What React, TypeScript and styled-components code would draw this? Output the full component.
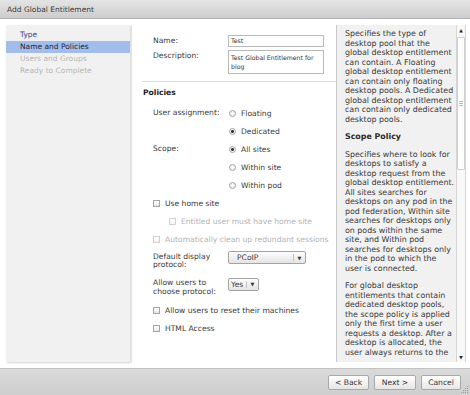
import React from "react";
import styled, { createGlobalStyle } from "styled-components";

const GlobalStyle = createGlobalStyle`
  html, body { margin: 0; padding: 0; background: #fff; }
  body { font-family: "DejaVu Sans", Verdana, sans-serif; color: #333; }
  #root { width: 470px; height: 395px; }
  * { box-sizing: border-box; }
`;

const Dialog = styled.div`
  position: relative;
  width: 470px;
  height: 395px;
  display: flex;
  flex-direction: column;
  background: #fff;
  overflow: hidden;
`;

const TitleBar = styled.div`
  height: 19px;
  flex: none;
  display: flex;
  align-items: center;
  padding-left: 7px;
  background: linear-gradient(#e4e4e4, #cdcdcd);
  border-bottom: 1px solid #b4b4b4;
  font-size: 7.5px;
  color: #3a3a3a;
`;

const Body = styled.div`
  flex: 1;
  min-height: 0;
  display: flex;
  padding: 6px 4px 6px 6px;
`;

const Nav = styled.div`
  width: 124px;
  flex: none;
  background: #f1f1f1;
  box-shadow: 1px 1px 2px rgba(0, 0, 0, 0.18);
  padding-top: 4px;
`;

const NavItem = styled.div<{ $state: "done" | "active" | "todo" }>`
  height: 12px;
  line-height: 12px;
  padding-left: 14px;
  font-size: 7.5px;
  white-space: nowrap;
  color: ${(p) => (p.$state === "done" ? "#3a3a8e" : p.$state === "active" ? "#23233f" : "#b6b6b6")};
  background: ${(p) => (p.$state === "active" ? "#a2bdea" : "transparent")};
`;

const FormPanel = styled.div`
  width: 206px;
  flex: none;
  margin-left: 1px;
  background: #fff;
  border-left: 1px solid #e2e2e2;
  border-right: 1px solid #c9c9c9;
  padding: 10px 0 0 21px;
  display: flex;
  flex-direction: column;
  font-size: 7.6px;
  color: #3a3a3a;
`;

const FieldGrid = styled.div`
  display: grid;
  grid-template-columns: 75px 96px;
  row-gap: 3px;
  align-items: start;
`;

const FieldLabel = styled.div`
  line-height: 12px;
  white-space: nowrap;
`;

const TextBox = styled.div<{ $multi?: boolean }>`
  height: ${(p) => (p.$multi ? 24 : 12)}px;
  border: 1px solid #b9b9b9;
  background: #fff;
  font-size: 6.2px;
  line-height: ${(p) => (p.$multi ? 9 : 10)}px;
  padding: ${(p) => (p.$multi ? "2px 2px" : "0 2px")};
  color: #333;
`;

const Divider = styled.div`
  height: 1px;
  background: #dcdcdc;
  margin: 7px 0 0 -11px;
`;

const SectionTitle = styled.div`
  font-weight: bold;
  line-height: 9.5px;
  margin: 6px 0 0 -10px;
  color: #222;
`;

const PolicyGrid = styled.div`
  display: grid;
  grid-template-columns: 75px auto;
  margin-top: 6.5px;
`;

const PolicyLabel = styled.div<{ $rows: number }>`
  grid-row: span ${(p) => p.$rows};
  line-height: 18px;
  white-space: nowrap;
`;

const OptionList = styled.div<{ $rows: number }>`
  grid-row: span ${(p) => p.$rows};
  display: flex;
  flex-direction: column;
`;

const OptionRow = styled.div`
  height: 18px;
  display: flex;
  align-items: center;
  gap: 5px;
  padding-left: 1px;
  white-space: nowrap;
`;

const Radio = styled.span<{ $checked?: boolean }>`
  width: 7px;
  height: 7px;
  border-radius: 50%;
  border: 1px solid #a3a3a3;
  background: radial-gradient(circle, ${(p) => (p.$checked ? "#333 0 1.3px, #fff 1.6px" : "#fff 0")}, #e8e8e8 100%);
  flex: none;
`;

const CheckRow = styled.div<{ $indent?: boolean; $disabled?: boolean }>`
  height: 18px;
  display: flex;
  align-items: center;
  gap: 5px;
  padding-left: ${(p) => (p.$indent ? 16 : 0)}px;
  white-space: nowrap;
  color: ${(p) => (p.$disabled ? "#b3b3b3" : "#3a3a3a")};
`;

const Checkbox = styled.span<{ $disabled?: boolean }>`
  width: 7px;
  height: 7px;
  flex: none;
  border: 1px solid ${(p) => (p.$disabled ? "#d0d0d0" : "#a6a6a6")};
  background: linear-gradient(#fff, ${(p) => (p.$disabled ? "#f3f3f3" : "#e6e6e6")});
`;

const SelectRow = styled.div<{ $gap: number }>`
  display: grid;
  grid-template-columns: 75px auto;
  align-items: start;
  margin-top: ${(p) => p.$gap}px;
`;

const SelectLabel = styled.div`
  line-height: 8.5px;
  padding-top: 1.5px;
`;

const Select = styled.div<{ $width: number }>`
  width: ${(p) => p.$width}px;
  height: 13px;
  display: flex;
  align-items: stretch;
  border: 1px solid #a3a3a3;
  border-radius: 2px;
  background: linear-gradient(#fdfdfd, #e4e4e4);
`;

const SelectValue = styled.div<{ $pad: number }>`
  flex: 1;
  line-height: 11px;
  padding-left: ${(p) => p.$pad}px;
  white-space: nowrap;
`;

const SelectArrow = styled.div`
  width: 12px;
  flex: none;
  border-left: 1px solid #c4c4c4;
  margin: 2px 0;
  display: flex;
  align-items: center;
  justify-content: center;
  font-size: 5px;
  color: #333;
`;

const BottomChecks = styled.div`
  margin-top: 5px;
  display: flex;
  flex-direction: column;
`;

const HelpPanel = styled.div`
  flex: 1;
  min-width: 0;
  background: #f1f1f1;
  padding: 4.25px 0 0 8px;
  overflow: hidden;
  font-size: 7.9px;
  line-height: 9.5px;
  color: #3a3a3a;
`;

const HelpPara = styled.p`
  margin: 0 0 8px;
  white-space: nowrap;
`;

const HelpHeading = styled.div`
  font-weight: bold;
  margin-bottom: 8px;
  color: #2a2a2a;
`;

const Scrollbar = styled.div`
  width: 10px;
  flex: none;
  border-left: 1px solid #d6d6d6;
  border-right: 1px solid #d6d6d6;
  background: #f8f8f8;
  display: flex;
  flex-direction: column;
`;

const ScrollButton = styled.div`
  height: 10px;
  display: flex;
  align-items: center;
  justify-content: center;
  font-size: 4.5px;
  color: #222;
`;

const ScrollThumb = styled.div`
  height: 133px;
  margin: 2px 0 0;
  border: 1px solid #cfcfcf;
  border-radius: 1px;
  background: #fdfdfd;
  display: flex;
  align-items: center;
  justify-content: center;
`;

const Grip = styled.div`
  width: 4px;
  height: 5px;
  border-top: 1px solid #bdbdbd;
  border-bottom: 1px solid #bdbdbd;
  position: relative;
  &::after {
    content: "";
    position: absolute;
    left: 0;
    right: 0;
    top: 1px;
    height: 1px;
    background: #bdbdbd;
  }
`;

const ScrollSpacer = styled.div`
  flex: 1;
`;

const BottomBar = styled.div`
  height: 27px;
  flex: none;
  display: flex;
  align-items: center;
  justify-content: flex-end;
  gap: 5px;
  padding-right: 9px;
  background: linear-gradient(#dadada, #cecece);
  border-top: 1px solid #c2c2c2;
`;

const Button = styled.button<{ $width: number }>`
  width: ${(p) => p.$width}px;
  height: 15px;
  padding: 0;
  border: 1px solid #a9a9a9;
  border-radius: 2px;
  background: linear-gradient(#ffffff, #e6e6e6);
  font-family: "DejaVu Sans", Verdana, sans-serif;
  font-size: 7.6px;
  color: #333;
`;

const ResizeGrip = styled.svg`
  position: absolute;
  right: 1px;
  bottom: 1px;
`;

const helpP1 = [
  "Specifies the type of",
  "desktop pool that the",
  "global desktop entitlement",
  "can contain. A Floating",
  "global desktop entitlement",
  "can contain only floating",
  "desktop pools. A Dedicated",
  "global desktop entitlement",
  "can contain only dedicated",
  "desktop pools.",
];

const helpP2 = [
  "Specifies where to look for",
  "desktops to satisfy a",
  "desktop request from the",
  "global desktop entitlement.",
  "All sites searches for",
  "desktops on any pod in the",
  "pod federation, Within site",
  "searches for desktops only",
  "on pods within the same",
  "site, and Within pod",
  "searches for desktops only",
  "in the pod to which the",
  "user is connected.",
];

const helpP3 = [
  "For global desktop",
  "entitlements that contain",
  "dedicated desktop pools,",
  "the scope policy is applied",
  "only the first time a user",
  "requests a desktop. After a",
  "desktop is allocated, the",
  "user always returns to the",
];

const Lines = ({ lines }: { lines: string[] }) => (
  <HelpPara>
    {lines.map((l, i) => (
      <React.Fragment key={i}>
        {l}
        {i < lines.length - 1 && <br />}
      </React.Fragment>
    ))}
  </HelpPara>
);

export default function App() {
  return (
    <>
      <GlobalStyle />
      <Dialog>
        <TitleBar>Add Global Entitlement</TitleBar>
        <Body>
          <Nav>
            <NavItem $state="done">Type</NavItem>
            <NavItem $state="active">Name and Policies</NavItem>
            <NavItem $state="todo">Users and Groups</NavItem>
            <NavItem $state="todo">Ready to Complete</NavItem>
          </Nav>
          <FormPanel>
            <FieldGrid>
              <FieldLabel>Name:</FieldLabel>
              <TextBox>Test</TextBox>
              <FieldLabel>Description:</FieldLabel>
              <TextBox $multi>Test Global Entitlement for blog</TextBox>
            </FieldGrid>
            <Divider />
            <SectionTitle>Policies</SectionTitle>
            <PolicyGrid>
              <PolicyLabel $rows={2}>User assignment:</PolicyLabel>
              <OptionList $rows={2}>
                <OptionRow>
                  <Radio />
                  Floating
                </OptionRow>
                <OptionRow>
                  <Radio $checked />
                  Dedicated
                </OptionRow>
              </OptionList>
              <PolicyLabel $rows={3}>Scope:</PolicyLabel>
              <OptionList $rows={3}>
                <OptionRow>
                  <Radio $checked />
                  All sites
                </OptionRow>
                <OptionRow>
                  <Radio />
                  Within site
                </OptionRow>
                <OptionRow>
                  <Radio />
                  Within pod
                </OptionRow>
              </OptionList>
            </PolicyGrid>
            <CheckRow>
              <Checkbox />
              Use home site
            </CheckRow>
            <CheckRow $indent $disabled>
              <Checkbox $disabled />
              Entitled user must have home site
            </CheckRow>
            <CheckRow $disabled>
              <Checkbox $disabled />
              Automatically clean up redundant sessions
            </CheckRow>
            <SelectRow $gap={3}>
              <SelectLabel>
                Default display
                <br />
                protocol:
              </SelectLabel>
              <Select $width={78}>
                <SelectValue $pad={8}>PCoIP</SelectValue>
                <SelectArrow>▼</SelectArrow>
              </Select>
            </SelectRow>
            <SelectRow $gap={8}>
              <SelectLabel>
                Allow users to
                <br />
                choose protocol:
              </SelectLabel>
              <Select $width={31}>
                <SelectValue $pad={2}>Yes</SelectValue>
                <SelectArrow>▼</SelectArrow>
              </Select>
            </SelectRow>
            <BottomChecks>
              <CheckRow>
                <Checkbox />
                Allow users to reset their machines
              </CheckRow>
              <CheckRow>
                <Checkbox />
                HTML Access
              </CheckRow>
            </BottomChecks>
          </FormPanel>
          <HelpPanel>
            <Lines lines={helpP1} />
            <HelpHeading>Scope Policy</HelpHeading>
            <Lines lines={helpP2} />
            <Lines lines={helpP3} />
          </HelpPanel>
          <Scrollbar>
            <ScrollButton>▲</ScrollButton>
            <ScrollThumb>
              <Grip />
            </ScrollThumb>
            <ScrollSpacer />
            <ScrollButton>▼</ScrollButton>
          </Scrollbar>
        </Body>
        <BottomBar>
          <Button $width={41}>&lt; Back</Button>
          <Button $width={42}>Next &gt;</Button>
          <Button $width={40}>Cancel</Button>
        </BottomBar>
        <ResizeGrip width="10" height="10" viewBox="0 0 10 10">
          <g fill="#9a9a9a">
            <rect x="8" y="2" width="1" height="1" />
            <rect x="6" y="4" width="1" height="1" />
            <rect x="8" y="4" width="1" height="1" />
            <rect x="4" y="6" width="1" height="1" />
            <rect x="6" y="6" width="1" height="1" />
            <rect x="8" y="6" width="1" height="1" />
            <rect x="2" y="8" width="1" height="1" />
            <rect x="4" y="8" width="1" height="1" />
            <rect x="6" y="8" width="1" height="1" />
            <rect x="8" y="8" width="1" height="1" />
          </g>
        </ResizeGrip>
      </Dialog>
    </>
  );
}
